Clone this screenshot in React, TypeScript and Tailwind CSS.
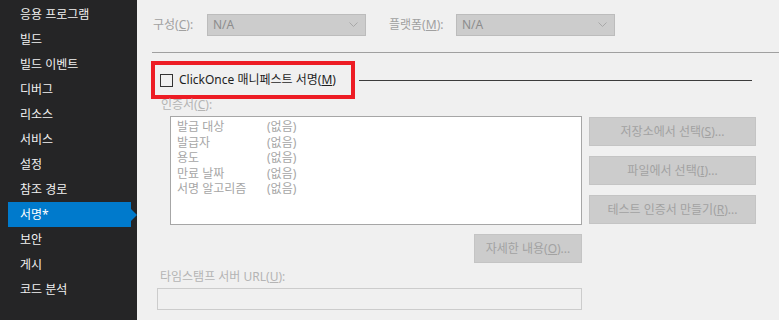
import {ReactNode} from "react";

const navItems = [
    "응용 프로그램",
    "빌드",
    "빌드 이벤트",
    "디버그",
    "리소스",
    "서비스",
    "설정",
    "참조 경로",
    "서명*",
    "보안",
    "게시",
    "코드 분석",
];

const certRows = [
    ["발급 대상", "(없음)"],
    ["발급자", "(없음)"],
    ["용도", "(없음)"],
    ["만료 날짜", "(없음)"],
    ["서명 알고리즘", "(없음)"],
];

const Key = ({children}: {children: ReactNode}) => <span className="underline">{children}</span>;

const Select = ({width}: {width: string}) => (
    <div
        className={`${width} h-[22px] flex items-center justify-between bg-[#cccccc] border border-[#bcbcbc] pl-[5px] pr-[7px] text-[#8c8c8c]`}>
        <span>N/A</span>
        <svg width="9" height="6" viewBox="0 0 9 6" fill="none">
            <path d="M0.5 0.5 L4.5 4.5 L8.5 0.5" stroke="#a8a8a8" strokeWidth="1"/>
        </svg>
    </div>
);

const GrayButton = ({children, className = ""}: { children: ReactNode; className?: string }) => (
    <div
        className={`h-[29px] flex items-center justify-center bg-[#cccccc] border border-[#c4c4c4] text-[#a2a2a2] ${className}`}>
        {children}
    </div>
);

export default function App() {
    return (
        <div
            className="flex w-[779px] h-[320px] overflow-hidden text-[12px] leading-[16px]"
            style={{fontFamily: '"Noto Sans", "Noto Sans CJK KR", sans-serif'}}>
            {/* sidebar */}
            <div className="w-[137px] shrink-0 bg-[#252526] pt-[2px] flex flex-col">
                {navItems.map((item) => {
                    const active = item === "서명*";
                    return (
                        <div key={item} className="relative h-[25px] flex items-center">
                            {active ? (
                                <>
                                    <div
                                        className="ml-[8px] w-[123px] h-[25px] bg-[#007acc] text-white flex items-center pl-[12px]">
                                        {item}
                                    </div>
                                    <div
                                        className="absolute left-[131px] top-[7px] w-0 h-0 border-y-[6px] border-y-transparent border-l-[6px] border-l-[#007acc]"/>
                                </>
                            ) : (
                                <span className="pl-[20px] text-[#f1f1f1]">{item}</span>
                            )}
                        </div>
                    );
                })}
            </div>

            {/* main */}
            <div className="flex-1 bg-[#f0f0f0] flex flex-col">
                <div className="flex items-center pt-[14px] pl-[16px]">
                    <span className="w-[54px] text-[#a0a0a0]">구성(<Key>C</Key>):</span>
                    <Select width="w-[159px]"/>
                    <span className="ml-[23px] w-[67px] text-[#a0a0a0]">플랫폼(<Key>M</Key>):</span>
                    <Select width="w-[159px]"/>
                </div>

                <div className="mt-[16px] ml-[15px] h-px bg-[#a0a0a0]"/>

                <div className="mt-[8px] ml-[14px] flex items-center">
                    <div
                        className="w-[204px] h-[38px] border-[4px] border-[#ed1c24] flex items-center pl-[5px]">
                        <div className="w-[13px] h-[13px] border border-[#333333] bg-[#f0f0f0]"/>
                        <span className="ml-[6px] text-[#1e1e1e]">ClickOnce 매니페스트 서명(<Key>M</Key>)</span>
                    </div>
                    <div className="ml-[4px] w-[393px] h-px bg-[#3c3c3c]"/>
                </div>

                <div className="ml-[24px] mt-[-2px] text-[#b4b4b4]">인증서(<Key>C</Key>):</div>

                <div className="flex mt-[3px] ml-[33px]">
                    <div className="flex flex-col items-end">
                        <div
                            className="w-[412px] h-[109px] bg-white border border-[#a6a6a6] pl-[6px] pt-[2px] text-[#a6a6a6] leading-[15.5px]">
                            {certRows.map(([k, v]) => (
                                <div key={k} className="flex">
                                    <span className="w-[90px]">{k}</span>
                                    <span>{v}</span>
                                </div>
                            ))}
                        </div>
                        <GrayButton className="mt-[9px] w-[108px] h-[28px]">자세한 내용(<Key>O</Key>)...</GrayButton>
                    </div>
                    <div className="ml-[7px] mt-px flex flex-col gap-[10px]">
                        <GrayButton className="w-[167px]">저장소에서 선택(<Key>S</Key>)...</GrayButton>
                        <GrayButton className="w-[167px]">파일에서 선택(<Key>I</Key>)...</GrayButton>
                        <GrayButton className="w-[167px]">테스트 인증서 만들기(<Key>R</Key>)...</GrayButton>
                    </div>
                </div>

                <div className="ml-[23px] mt-[6px] text-[#b4b4b4]">타임스탬프 서버 URL(<Key>U</Key>):</div>
                <div className="ml-[20px] mt-[3px] w-[425px] h-[22px] border border-[#cccccc] bg-[#f0f0f0]"/>
            </div>
        </div>
    );
}
